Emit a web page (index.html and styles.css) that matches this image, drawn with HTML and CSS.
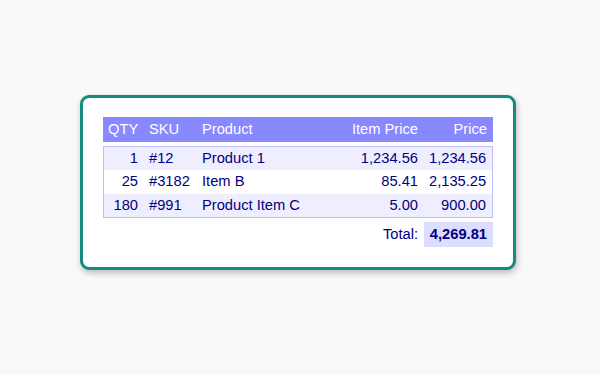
FILE: index.html
```html
<!DOCTYPE html>
<html lang="en">
<head>
<meta charset="utf-8">
<link rel="stylesheet" href="styles.css">
</head>
<body>
<div class="card">
  <div class="invoice">
    <div class="row head">
      <div class="c num">QTY</div>
      <div class="c">SKU</div>
      <div class="c">Product</div>
      <div class="c num">Item Price</div>
      <div class="c num">Price</div>
    </div>
    <div class="items">
      <div class="row alt">
        <div class="c num">1</div>
        <div class="c">#12</div>
        <div class="c">Product 1</div>
        <div class="c num">1,234.56</div>
        <div class="c num">1,234.56</div>
      </div>
      <div class="row">
        <div class="c num">25</div>
        <div class="c">#3182</div>
        <div class="c">Item B</div>
        <div class="c num">85.41</div>
        <div class="c num">2,135.25</div>
      </div>
      <div class="row alt">
        <div class="c num">180</div>
        <div class="c">#991</div>
        <div class="c">Product Item C</div>
        <div class="c num">5.00</div>
        <div class="c num">900.00</div>
      </div>
    </div>
    <div class="row total">
      <div class="c num label">Total:</div>
      <div class="c num amount">4,269.81</div>
    </div>
  </div>
</div>
</body>
</html>
```

FILE: styles.css
```css
html, body {
  margin: 0;
  padding: 0;
}
body {
  background: #f9f9f9;
  font-family: "Liberation Sans", Arial, sans-serif;
  font-size: 14.7px;
  color: #000080;
  padding: 95px 0 0 80px;
  height: 375px;
  box-sizing: border-box;
}
.card {
  width: 436px;
  box-sizing: border-box;
  background: #fff;
  border: 3px solid #168a7e;
  border-radius: 9px;
  padding: 19px 20px 20px 20px;
  box-shadow: 1px 3px 6px rgba(0, 0, 0, 0.25);
}
.row {
  display: grid;
  grid-template-columns: 41px 53px 1fr 79px 69px;
}
.c {
  padding: 0 6px 0 5px;
  line-height: 23.3px;
  white-space: nowrap;
}
.num {
  text-align: right;
}
.head {
  background: #8888ff;
  color: #fff;
}
.head .c {
  line-height: 25px;
}
.items {
  margin-top: 4px;
  border: 1px solid #bbbbff;
}
.items .row {
  grid-template-columns: 40px 53px 1fr 79px 68px;
}
.alt {
  background: #eeeeff;
}
.total {
  margin-top: 4px;
}
.total .label {
  grid-column: 4;
  line-height: 25px;
}
.total .amount {
  grid-column: 5;
  background: #ddddff;
  font-weight: bold;
  line-height: 25px;
}
```
